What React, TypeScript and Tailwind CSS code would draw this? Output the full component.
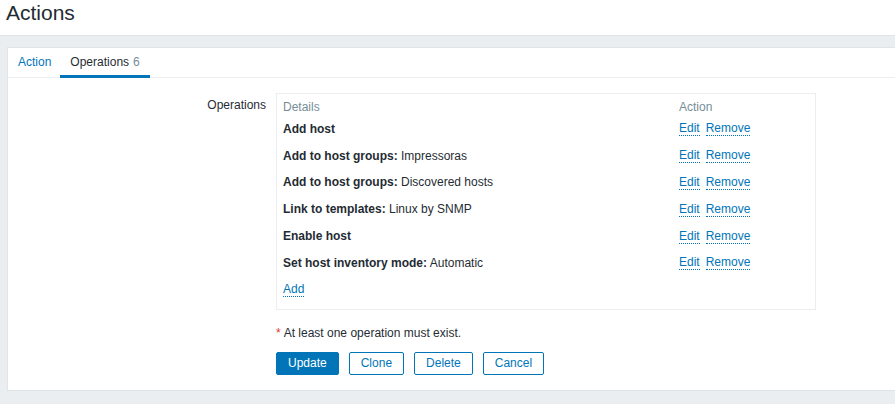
import React from "react";

type Row = { b: string; t?: string };

const rows: Row[] = [
  { b: "Add host" },
  { b: "Add to host groups:", t: "Impressoras" },
  { b: "Add to host groups:", t: "Discovered hosts" },
  { b: "Link to templates:", t: "Linux by SNMP" },
  { b: "Enable host" },
  { b: "Set host inventory mode:", t: "Automatic" },
];

function Link({ children }: { children: React.ReactNode }) {
  return (
    <span className="inline-block leading-[14px] text-[#0275b8] border-b border-dotted border-[#0275b8] cursor-pointer">
      {children}
    </span>
  );
}

export default function App() {
  return (
    <div className="min-h-[404px] bg-[#ebeef0] font-['Liberation_Sans',Arial,sans-serif] text-[12px] text-[#1f2c33]">
      <header className="h-[36px] bg-white border-b border-[#dfe4e7] px-[6px] pt-[2px]">
        <h1 className="text-[21px] leading-[21px] text-[#1f2c33]">Actions</h1>
      </header>
      <div className="pt-[11px] pl-[7px]">
        <div className="h-[344px] bg-white border-l border-t border-b border-[#dfe4e7]">
          <div className="flex h-[30px] border-b border-[#ebeef0]">
            <div className="h-[30px] pl-[10px] pr-[9px] flex items-center border-b-[3px] border-transparent text-[#0275b8]">
              Action
            </div>
            <div className="h-[30px] px-[10px] flex items-center border-b-[3px] border-[#0275b8] text-[#1f2c33]">
              Operations<span className="ml-[4px] text-[#768d99]">6</span>
            </div>
          </div>
          <div className="grid grid-cols-[258px_1fr] gap-x-[10px] pt-[15px]">
            <div className="text-right pt-[5px] leading-[14px]">Operations</div>
            <div>
              <div className="w-[540px] border border-[#ebeef0] px-[6px] pt-[6px] pb-[5.5px]">
                <div className="flex h-[15.5px] leading-[14px] text-[#768d99]">
                  <div className="w-[396px]">Details</div>
                  <div>Action</div>
                </div>
                {rows.map((r, i) => (
                  <div key={i} className="flex items-center h-[26.8px]">
                    <div className="w-[396px] leading-[14px]">
                      <span className="font-bold">{r.b}</span>
                      {r.t ? <span> {r.t}</span> : null}
                    </div>
                    <div className="flex gap-[6px]">
                      <Link>Edit</Link>
                      <Link>Remove</Link>
                    </div>
                  </div>
                ))}
                <div className="flex items-center h-[26.8px]">
                  <Link>Add</Link>
                </div>
              </div>
              <div className="mt-[16px] leading-[14px]">
                <span className="text-[#e33734]">*</span>
                <span className="ml-[3px]">At least one operation must exist.</span>
              </div>
              <div className="mt-[12px] flex gap-[10px]">
                <button className="h-[23px] px-[11px] border border-[#0275b8] bg-[#0275b8] text-white rounded-[2px] leading-[14px]">
                  Update
                </button>
                <button className="h-[23px] px-[11px] border border-[#0275b8] bg-white text-[#0275b8] rounded-[2px] leading-[14px]">
                  Clone
                </button>
                <button className="h-[23px] px-[11px] border border-[#0275b8] bg-white text-[#0275b8] rounded-[2px] leading-[14px]">
                  Delete
                </button>
                <button className="h-[23px] px-[11px] border border-[#0275b8] bg-white text-[#0275b8] rounded-[2px] leading-[14px]">
                  Cancel
                </button>
              </div>
            </div>
          </div>
        </div>
      </div>
    </div>
  );
}
